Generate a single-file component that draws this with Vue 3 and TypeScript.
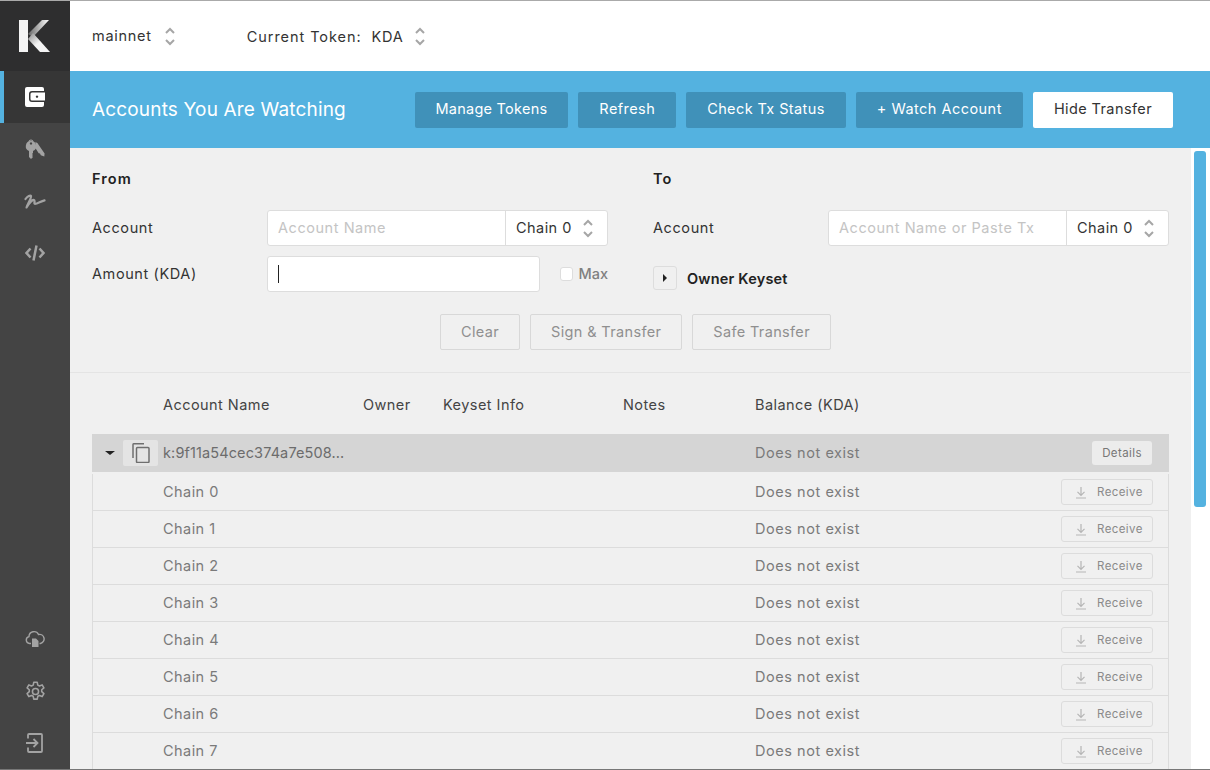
<script setup lang="ts">
const chains = [0, 1, 2, 3, 4, 5, 6, 7]
const headerButtons = ['Manage Tokens', 'Refresh', 'Check Tx Status', '+ Watch Account']
</script>

<template>
  <div class="app">
    <aside class="sidebar">
      <div class="logo">
        <svg width="34" height="34" viewBox="0 0 34 34">
          <defs>
            <linearGradient id="kg" x1="0" y1="0" x2="1" y2="0">
              <stop offset="0" stop-color="#666" />
              <stop offset="1" stop-color="#fff" />
            </linearGradient>
            <linearGradient id="kl" x1="0" y1="0" x2="1" y2="1">
              <stop offset="0" stop-color="#888" />
              <stop offset=".5" stop-color="#f4f4f4" />
            </linearGradient>
          </defs>
          <rect x="1" y="1" width="9" height="32" fill="#f4f4f4" />
          <path d="M10 15 L24 1 L31 1 L15 18 Z" fill="url(#kg)" />
          <path d="M10 20 L15 14 L32 33 L22 33 Z" fill="url(#kl)" />
        </svg>
      </div>
      <div class="nav-active">
        <svg width="22" height="20" viewBox="0 0 22 20">
          <path d="M3 0H18a2 2 0 0 1 2 2V4H8a3 3 0 0 0-3 3V12a3 3 0 0 0 3 3H20V18a2 2 0 0 1-2 2H3a2 2 0 0 1-2-2V2a2 2 0 0 1 2-2Z" fill="#fff" />
          <path fill-rule="evenodd" d="M8 5.500H21V13.500H8a1.500 1.500 0 0 1-1.500-1.500V7A1.500 1.500 0 0 1 8 5.500ZM13 8.400a1.200 1.200 0 1 0 .01 0Z" fill="#fff" />
        </svg>
      </div>
      <div class="nav-item">
        <svg width="20" height="20" viewBox="0 0 20 20" fill="#a3a3a3">
          <path fill-rule="evenodd" d="M6 2a5.200 5.200 0 0 1 2 10V14L7 15l1 1-1 1 1 1-2 2-2-2V12A5.200 5.200 0 0 1 6 2Zm0 1.300a1.200 1.200 0 1 0 .01 0Z" />
          <path d="M3.400 3.500C3.400 -.6 8.600 -.6 8.600 3.500H7.700C7.700 .8 4.300 .8 4.300 3.500Z" />
          <path d="M10.200 3.200C12 3.400 13 4.300 13.400 5.600L19.600 14.500 19.300 17.500 15.800 16.300 15 14.600 13.700 14.200 10.200 8.800C10.900 7 10.900 5 10.200 3.200Z" />
        </svg>
      </div>
      <div class="nav-item">
        <svg width="22" height="15" viewBox="0 0 22 15" fill="none" stroke="#a3a3a3" stroke-width="2.200" stroke-linecap="round" stroke-linejoin="round">
          <path d="M1.500 5C3.500 2 6.500 .8 7 2 7.500 4 4 9 2.500 13.500 5 9 8.500 5.500 10 6 11.500 6.500 9.500 10 11 10 13.500 10 17 7 20.500 6.300" />
        </svg>
      </div>
      <div class="nav-item">
        <svg width="20" height="16" viewBox="0 0 20 16" fill="none" stroke="#a3a3a3" stroke-width="2.500">
          <path d="M5.500 3.500L1.500 8l4 4.500M14.500 3.500L18.500 8l-4 4.500M11.500 .5L8.500 15.500" />
        </svg>
      </div>
      <div class="spacer"></div>
      <div class="nav-item">
        <svg width="20" height="18" viewBox="0 0 20 18" fill="none" stroke="#a3a3a3" stroke-width="1.400">
          <path d="M6 13.500H4.500A3.500 3.500 0 0 1 4 6.600 5 5 0 0 1 13.500 4.500 4.500 4.500 0 0 1 15.500 13.500H14.500" />
          <path d="M7 8.500h4l2.500 2.500v6H7Z" fill="#a3a3a3" stroke="none" />
        </svg>
      </div>
      <div class="nav-item">
        <svg width="21" height="21" viewBox="0 0 24 24" fill="none" stroke="#a3a3a3" stroke-width="1.800" stroke-linejoin="round">
          <circle cx="12" cy="12" r="3.500" />
          <path d="M10 1.500h4l.6 3.200 2 1 3-1.300 2 3.400-2.500 2.200v2.200l2.500 2.200-2 3.400-3-1.300-2 1-.6 3.200h-4l-.6-3.200-2-1-3 1.300-2-3.400 2.500-2.200v-2.200L2.400 7.800l2-3.400 3 1.300 2-1Z" />
        </svg>
      </div>
      <div class="nav-item">
        <svg width="18" height="20" viewBox="0 0 18 20" fill="none" stroke="#a3a3a3" stroke-width="1.800">
          <path d="M2 5.500V2a1 1 0 0 1 1-1h12a1 1 0 0 1 1 1v16a1 1 0 0 1-1 1H3a1 1 0 0 1-1-1v-3.500" />
          <path d="M0 10h11M7.500 6l4 4-4 4" />
        </svg>
      </div>
    </aside>

    <main class="main">
      <div class="topbar">
        <div class="picker net">
          <span class="up">mainnet</span>
          <svg class="updown" width="10" height="19" viewBox="0 0 10 19"><path d="M1 6l4-4 4 4M1 13l4 4 4-4" /></svg>
        </div>
        <div class="picker token">
          <span class="cur">Current Token:</span>
          <span>KDA</span>
          <svg class="updown mark" width="10" height="19" viewBox="0 0 10 19"><path d="M1 6l4-4 4 4M1 13l4 4 4-4" /></svg>
        </div>
      </div>

      <header class="banner">
        <h1>Accounts You Are Watching</h1>
        <div class="banner-btns">
          <button v-for="b in headerButtons" :key="b" class="bbtn">{{ b }}</button>
          <button class="bbtn white">Hide Transfer</button>
        </div>
      </header>

      <div class="content">
        <div class="track"><div class="scroll-thumb"></div></div>
        <section class="transfer">
          <div class="cols">
            <div class="col">
              <div class="heading">From</div>
              <div class="frow">
                <label>Account</label>
                <div class="group">
                  <div class="ph grow">Account Name</div>
                  <div class="chain"><span class="up">Chain 0</span>
                    <svg class="updown" width="10" height="19" viewBox="0 0 10 19"><path d="M1 6l4-4 4 4M1 13l4 4 4-4" /></svg>
                  </div>
                </div>
              </div>
              <div class="frow amount">
                <label>Amount (KDA)</label>
                <div class="amt"><i class="caret"></i></div>
                <span class="box"></span>
                <span class="max">Max</span>
              </div>
            </div>
            <div class="col">
              <div class="heading">To</div>
              <div class="frow">
                <label>Account</label>
                <div class="group">
                  <div class="ph grow">Account Name or Paste Tx</div>
                  <div class="chain"><span class="up">Chain 0</span>
                    <svg class="updown" width="10" height="19" viewBox="0 0 10 19"><path d="M1 6l4-4 4 4M1 13l4 4 4-4" /></svg>
                  </div>
                </div>
              </div>
              <div class="owner">
                <span class="tri-btn"><i class="tri"></i></span>
                <b>Owner Keyset</b>
              </div>
            </div>
          </div>
          <div class="actions">
            <button class="dis">Clear</button>
            <button class="dis">Sign &amp; Transfer</button>
            <button class="dis">Safe Transfer</button>
          </div>
        </section>

        <section class="table">
          <div class="thead">
            <span class="c-name">Account Name</span>
            <span class="c-owner">Owner</span>
            <span class="c-key">Keyset Info</span>
            <span class="c-notes">Notes</span>
            <span class="c-bal">Balance (KDA)</span>
          </div>
          <div class="acct">
            <i class="down"></i>
            <span class="copy">
              <svg width="19" height="20" viewBox="0 0 19 20" fill="none" stroke="#6f6f6f" stroke-width="1.500">
                <path d="M2 15V1.500A.8.8 0 0 1 2.800 .8H13" />
                <rect x="5.500" y="4.500" width="12.500" height="15" rx="1" />
              </svg>
            </span>
            <span class="acct-name up">k:9f11a54cec374a7e508...</span>
            <span class="acct-bal up">Does not exist</span>
            <button class="details">Details</button>
          </div>
          <div class="rows">
            <div v-for="c in chains" :key="c" class="crow">
              <span class="chain-name up">Chain {{ c }}</span>
              <span class="chain-bal up">Does not exist</span>
              <button class="recv">
                <svg width="12" height="13" viewBox="0 0 12 13" fill="none" stroke="#b5b5b5" stroke-width="1.200">
                  <path d="M6 1v8M2.500 5.800L6 9.300l3.500-3.500M1 12h10" />
                </svg>
                <span>Receive</span>
              </button>
            </div>
          </div>
        </section>
      </div>
    </main>
  </div>
</template>

<style>
html, body { margin: 0; padding: 0; overflow: hidden; }
</style>

<style scoped>
.app {
  width: 1210px;
  height: 770px;
  box-sizing: border-box;
  display: flex;
  overflow: hidden;
  border-top: 1px solid #aaa;
  border-bottom: 1px solid #777;
  font-family: Inter, "Liberation Sans", sans-serif;
  font-size: 14.5px;
  letter-spacing: .45px;
  color: #333;
  background: #f0f0f0;
}
.up { padding-bottom: 2px; }
.sidebar {
  width: 70px;
  flex: none;
  display: flex;
  flex-direction: column;
  background: #444;
}
.logo {
  height: 70px;
  background: #2e2e2f;
  display: flex;
  align-items: center;
  justify-content: center;
}
.nav-active {
  height: 52px;
  box-sizing: border-box;
  background: #363636;
  border-left: 4px solid #54b2e0;
  padding-right: 4px;
  display: flex;
  align-items: center;
  justify-content: center;
}
.nav-item {
  height: 52px;
  display: flex;
  align-items: center;
  justify-content: center;
}
.spacer { flex: 1; }
.main {
  flex: 1;
  min-width: 0;
  display: flex;
  flex-direction: column;
}
.topbar {
  height: 70px;
  flex: none;
  background: #fff;
  display: flex;
  align-items: center;
  color: #333;
  letter-spacing: .72px;
}
.picker { display: flex; align-items: center; }
.net { margin-left: 22px; gap: 13px; }
.token { margin-left: 72px; gap: 10px; }
.cur { letter-spacing: .94px; }
.mark { margin-left: 2px; }
.updown { fill: none; stroke: #a6a6a6; stroke-width: 2; flex: none; }
.banner {
  height: 77px;
  flex: none;
  background: #54b2e0;
  display: flex;
  align-items: center;
  justify-content: space-between;
  padding: 0 37px 0 22px;
  box-sizing: border-box;
}
.banner h1 {
  margin: 0;
  font-size: 19px;
  font-weight: 400;
  letter-spacing: .16px;
  color: #fff;
}
.banner-btns { display: flex; gap: 10px; }
.bbtn {
  height: 36px;
  padding: 0 21px 2px;
  border: none;
  border-radius: 2px;
  background: #4091b9;
  color: #fff;
  font: inherit;
  letter-spacing: .4px;
}
.bbtn:nth-child(1) { letter-spacing: .25px; }
.bbtn:nth-child(2) { letter-spacing: .42px; }
.bbtn:nth-child(4) { letter-spacing: .47px; }
.bbtn.white { background: #fff; color: #333; }
.content {
  flex: 1;
  min-height: 0;
  position: relative;
  overflow: hidden;
}
.track {
  position: absolute;
  top: 0;
  right: 0;
  bottom: 0;
  width: 19px;
  background: #fff;
}
.scroll-thumb {
  margin: 3px 0 0 3px;
  width: 12px;
  height: 356px;
  border-radius: 3px;
  background: #54b2e0;
}
.transfer {
  height: 225px;
  box-sizing: border-box;
  margin-right: 20px;
  padding: 20px 21px 0 22px;
  border-bottom: 1px solid #e4e4e4;
}
.cols { display: flex; gap: 45px; }
.col { width: 516px; }
.heading {
  font-weight: 600;
  height: 22px;
  line-height: 22px;
  margin-bottom: 20px;
  letter-spacing: 1.1px;
  color: #222;
}
.frow { display: flex; align-items: center; height: 36px; margin-bottom: 10px; }
.frow label { width: 175px; flex: none; padding-bottom: 2px; letter-spacing: .6px; }
.group {
  flex: 1;
  height: 36px;
  display: flex;
  box-sizing: border-box;
  background: #fff;
  border: 1px solid #ddd;
  border-radius: 3px;
}
.grow { flex: 1; }
.ph {
  color: #c4c4c4;
  padding-left: 10px;
  line-height: 34px;
  letter-spacing: .55px;
  white-space: nowrap;
  overflow: hidden;
}
.chain {
  width: 102px;
  flex: none;
  box-sizing: border-box;
  border-left: 1px solid #ddd;
  padding: 0 14px 0 10px;
  display: flex;
  align-items: center;
  justify-content: space-between;
  white-space: nowrap;
}
.amt {
  width: 273px;
  height: 36px;
  flex: none;
  box-sizing: border-box;
  background: #fff;
  border: 1px solid #ddd;
  border-radius: 3px;
  padding: 8px 10px;
}
.caret { display: block; width: 1px; height: 18px; background: #222; }
.box {
  width: 14px;
  height: 14px;
  box-sizing: border-box;
  margin-left: 20px;
  background: #fff;
  border: 1px solid #ddd;
  border-radius: 3px;
}
.max { margin-left: 5px; color: #808080; font-weight: 500; letter-spacing: 0; padding-bottom: 2px; }
.owner {
  display: flex;
  align-items: center;
  gap: 10px;
  height: 36px;
  margin-top: 14px;
}
.owner b { font-weight: 600; color: #222; letter-spacing: .2px; }
.tri-btn {
  width: 24px;
  height: 24px;
  box-sizing: border-box;
  border: 1px solid #ddd;
  border-radius: 3px;
  display: flex;
  align-items: center;
  justify-content: center;
}
.tri {
  border-left: 4px solid #222;
  border-top: 4px solid transparent;
  border-bottom: 4px solid transparent;
}
.actions { display: flex; justify-content: center; gap: 10px; margin-top: 12px; padding-left: 10px; }
.dis {
  height: 36px;
  padding: 0 20px 2px;
  box-sizing: border-box;
  border: 1px solid #d8d8d8;
  border-radius: 2px;
  background: transparent;
  color: #8f8f8f;
  font: inherit;
  letter-spacing: .35px;
}
.table { padding: 0 41px 0 22px; }
.thead {
  display: flex;
  height: 61px;
  box-sizing: border-box;
  padding-top: 2px;
  align-items: center;
  color: #444;
}
.c-name { width: 200px; margin-left: 71px; }
.c-owner { width: 80px; }
.c-key { width: 180px; }
.c-notes { width: 132px; }
.acct {
  height: 38px;
  display: flex;
  align-items: center;
  background: #d5d5d5;
}
.down {
  margin-left: 13px;
  border-top: 4px solid #222;
  border-left: 5px solid transparent;
  border-right: 5px solid transparent;
}
.copy {
  width: 35px;
  height: 26px;
  margin-left: 8px;
  background: #e4e4e4;
  border-radius: 2px;
  display: flex;
  align-items: center;
  justify-content: center;
}
.acct-name { margin-left: 5px; width: 592px; color: #6c6c6c; white-space: nowrap; letter-spacing: .12px; }
.acct-bal { color: #7a7a7a; flex: 1; letter-spacing: .55px; }
.details {
  height: 24px;
  width: 60px;
  margin-right: 17px;
  border: none;
  border-radius: 3px;
  background: #ececec;
  color: #777;
  font: inherit;
  font-size: 11.5px;
  letter-spacing: .4px;
  padding: 0;
}
.rows { padding-top: 2px; }
.crow {
  height: 37px;
  box-sizing: border-box;
  display: flex;
  align-items: center;
  border-bottom: 1px solid #dcdcdc;
  border-left: 1px solid #dcdcdc;
  border-right: 1px solid #dcdcdc;
  color: #7a7a7a;
}
.chain-name { margin-left: 70px; width: 592px; }
.chain-bal { flex: 1; letter-spacing: .55px; }
.recv {
  width: 92px;
  height: 26px;
  margin-right: 15px;
  box-sizing: border-box;
  border: 1px solid #dcdcdc;
  border-radius: 3px;
  background: transparent;
  color: #8a8a8a;
  font: inherit;
  font-size: 11.5px;
  letter-spacing: .4px;
  display: flex;
  align-items: center;
  padding: 0 0 0 13px;
  gap: 10px;
}
</style>
